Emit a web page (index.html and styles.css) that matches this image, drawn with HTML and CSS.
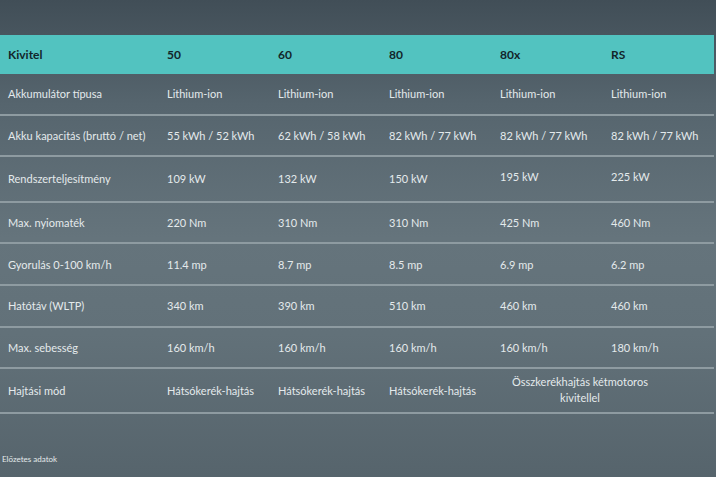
FILE: index.html
```html
<!DOCTYPE html>
<html lang="hu">
<head>
  <meta charset="UTF-8">
  <meta name="viewport" content="width=device-width, initial-scale=1.0">
  <title>Műszaki adatok</title>
  <link rel="stylesheet" href="styles.css">
</head>
<body>
  <div class="page">
    <table class="specs">
      <colgroup>
        <col class="col-label">
        <col class="col-val">
        <col class="col-val">
        <col class="col-val">
        <col class="col-val">
        <col class="col-val">
      </colgroup>
      <thead>
        <tr>
          <th>Kivitel</th>
          <th>50</th>
          <th>60</th>
          <th>80</th>
          <th>80x</th>
          <th>RS</th>
        </tr>
      </thead>
      <tbody>
        <tr>
          <td>Akkumulátor típusa</td>
          <td>Lithium-ion</td>
          <td>Lithium-ion</td>
          <td>Lithium-ion</td>
          <td>Lithium-ion</td>
          <td>Lithium-ion</td>
        </tr>
        <tr>
          <td>Akku kapacitás (bruttó / net)</td>
          <td>55 kWh / 52 kWh</td>
          <td>62 kWh / 58 kWh</td>
          <td>82 kWh / 77 kWh</td>
          <td>82 kWh / 77 kWh</td>
          <td>82 kWh / 77 kWh</td>
        </tr>
        <tr>
          <td>Rendszerteljesítmény</td>
          <td>109 kW</td>
          <td>132 kW</td>
          <td>150 kW</td>
          <td class="up">195 kW</td>
          <td class="up">225 kW</td>
        </tr>
        <tr>
          <td>Max. nyiomaték</td>
          <td>220 Nm</td>
          <td>310 Nm</td>
          <td>310 Nm</td>
          <td>425 Nm</td>
          <td>460 Nm</td>
        </tr>
        <tr>
          <td>Gyorulás 0-100 km/h</td>
          <td>11.4 mp</td>
          <td>8.7 mp</td>
          <td>8.5 mp</td>
          <td>6.9 mp</td>
          <td>6.2 mp</td>
        </tr>
        <tr>
          <td>Hatótáv (WLTP)</td>
          <td>340 km</td>
          <td>390 km</td>
          <td>510 km</td>
          <td>460 km</td>
          <td>460 km</td>
        </tr>
        <tr>
          <td>Max. sebesség</td>
          <td>160 km/h</td>
          <td>160 km/h</td>
          <td>160 km/h</td>
          <td>160 km/h</td>
          <td>180 km/h</td>
        </tr>
        <tr class="last">
          <td>Hajtási mód</td>
          <td>Hátsókerék-hajtás</td>
          <td>Hátsókerék-hajtás</td>
          <td>Hátsókerék-hajtás</td>
          <td colspan="2" class="merged">Összkerékhajtás kétmotoros kivitellel</td>
        </tr>
      </tbody>
    </table>
    <p class="note">Előzetes adatok</p>
  </div>
</body>
</html>
```

FILE: styles.css
```css
html, body {
  margin: 0;
  height: 100%;
}
body {
  font-family: Lato, "Noto Sans", sans-serif;
  color: #e4eaec;
  background: linear-gradient(180deg, #414e57 0%, #56656e 22%, #65747c 50%, #627179 70%, #56646c 100%);
  overflow: hidden;
}
.page {
  padding-top: 35px;
  width: 714px;
}
.specs {
  width: 714px;
  border-collapse: collapse;
  table-layout: fixed;
}
.col-label {
  width: 159px;
}
.col-val {
  width: 111px;
}
.specs th {
  background-color: #52c3c0;
  color: #13262a;
  font-size: 12px;
  font-weight: 700;
  text-align: left;
  height: 39px;
  padding: 0 8px;
}
.specs td {
  font-size: 11px;
  text-align: left;
  height: 39.6px;
  padding: 0 8px;
  border-bottom: 2px solid #8e9ba1;
  white-space: nowrap;
}
.specs tr.last td {
  height: 41px;
}
.specs td.up {
  padding-bottom: 4px;
}
.specs td.merged {
  white-space: normal;
  text-align: center;
  line-height: 16px;
  padding: 0 54px 2px 8px;
}
.note {
  margin: 40px 0 0 2px;
  font-size: 8px;
  color: #e4eaec;
}
```
